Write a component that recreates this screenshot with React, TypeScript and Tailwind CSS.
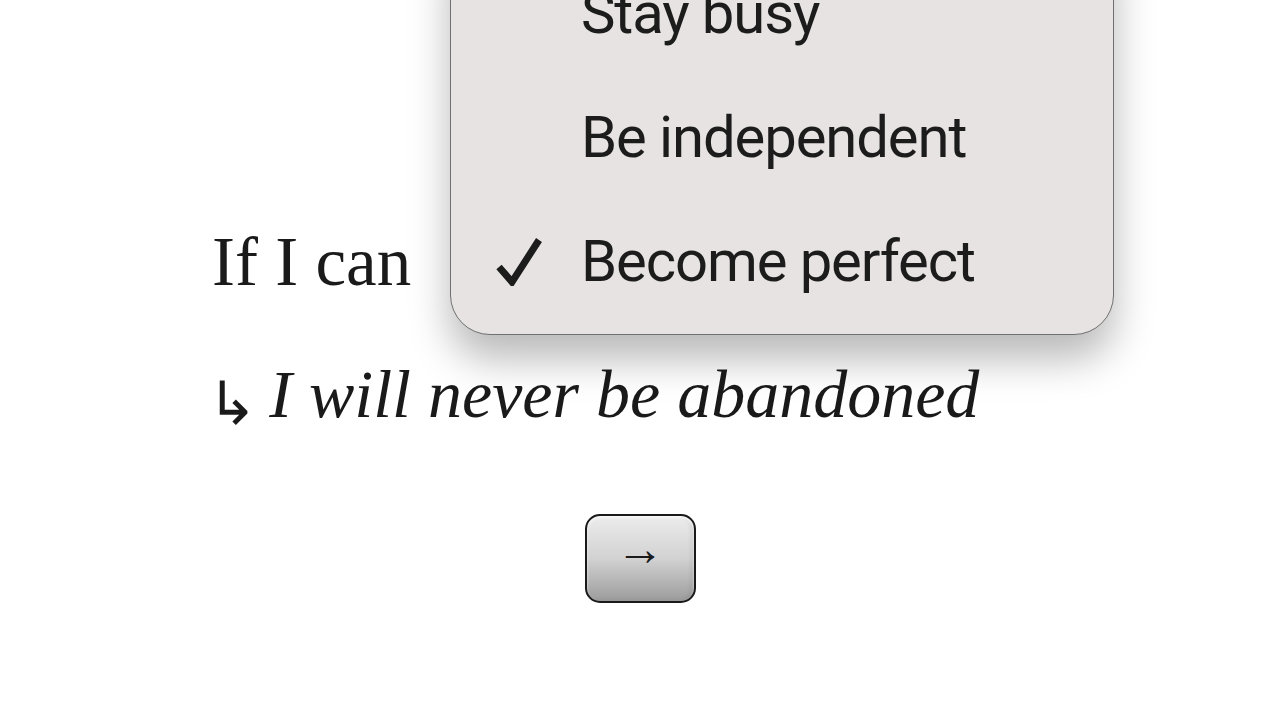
const options = ['Stay busy', 'Be independent', 'Become perfect'];
const selected = 'Become perfect';

const CheckMark = () => (
  <svg width="48" height="50" viewBox="0 0 48 50" className="text-[#1c1c1c]">
    <path d="M3 31 L16 46 L43 4" fill="none" stroke="currentColor" strokeWidth="7" strokeLinejoin="miter" />
  </svg>
);

export default function App() {
  return (
    <div className="relative h-[720px] w-[1280px] overflow-hidden bg-white">
      <div className="flex flex-col pl-[212px] pt-[228px] font-['Liberation_Serif',serif] text-[#1a1a1a]">
        <div className="h-[68px] text-[69px] leading-none">If I can</div>
        <div className="mt-[64px] flex h-[68px] items-center leading-none">
          <span className="-ml-[5px] mt-[18px] font-['DejaVu_Sans',sans-serif] text-[60px] leading-none">↳</span>
          <span className="ml-[12px] text-[68px] italic leading-none">I will never be abandoned</span>
        </div>
      </div>

      <div className="mt-[86px] flex justify-center">
        <button className="flex h-[89px] w-[111px] items-center justify-center rounded-[15px] border-2 border-[#1a1a1a] bg-gradient-to-b from-[#ececec] via-[#d2d2d2] to-[#9c9c9c] shadow-[inset_0_2px_3px_rgba(255,255,255,0.8),inset_-3px_0_4px_rgba(0,0,0,0.08)]">
          <span className="mb-[24px] font-['Noto_Sans',sans-serif] text-[48px] leading-none text-[#1a1a1a]">→</span>
        </button>
      </div>

      <div className="absolute left-[450px] top-[-60px] w-[664px] rounded-b-[40px] border border-[#707070] bg-[#e8e3e3] pb-[11px] pt-[10px] shadow-[0_24px_40px_rgba(0,0,0,0.28)]">
        {options.map((opt) => (
          <div key={opt} className="flex h-[124px] items-center">
            <div className="flex w-[130px] justify-end pr-[37px]">
              {opt === selected && <CheckMark />}
            </div>
            <span className="font-['Roboto',sans-serif] text-[58px] leading-none tracking-[-1.1px] text-[#1c1c1c]">
              {opt}
            </span>
          </div>
        ))}
      </div>
    </div>
  );
}
